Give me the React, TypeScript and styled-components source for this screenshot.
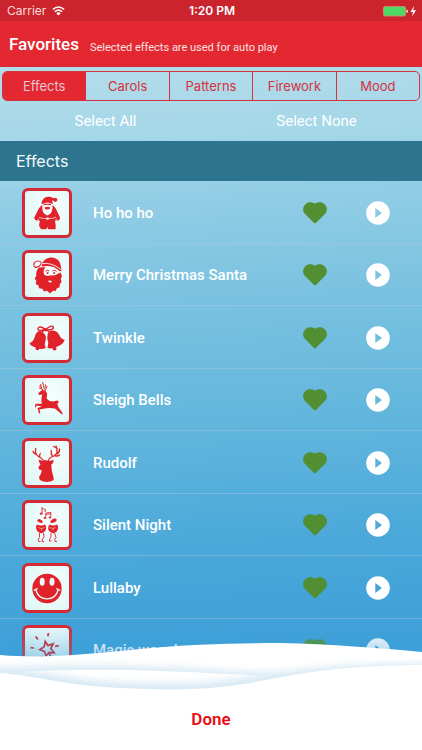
import React, { useState } from "react";
import styled, { createGlobalStyle, css } from "styled-components";

const RED = "#e32832";
const INK = "#e1222b";

const GlobalStyle = createGlobalStyle`
  *, *::before, *::after { box-sizing: border-box; }
  body { margin: 0; font-family: Roboto, sans-serif; }
  button { font: inherit; margin: 0; padding: 0; border: 0; background: none; cursor: pointer; }
  svg { display: block; }
`;

const Screen = styled.div`
  position: relative;
  display: flex;
  flex-direction: column;
  height: 100vh;
  min-height: 600px;
  overflow: hidden;
  background: #fff;
`;

const StatusBar = styled.div`
  display: grid;
  grid-template-columns: 1fr auto 1fr;
  align-items: center;
  flex: none;
  height: 21px;
  padding: 1px 5px 0 7px;
  background: #cb242d;
  color: #fff;
  font: 400 12px/20px Inter, sans-serif;
`;

const Carrier = styled.span`
  display: flex;
  align-items: center;
  gap: 6px;
  color: #fbdcdd;
`;

const Clock = styled.time`
  font-weight: 600;
`;

const Power = styled.span`
  display: flex;
  align-items: center;
  justify-content: flex-end;
`;

const Header = styled.header`
  display: flex;
  align-items: flex-end;
  gap: 11px;
  flex: none;
  height: 46px;
  padding: 0 9px 12px;
  background: ${RED};
  border-bottom: 1px solid #cf2a35;
  color: #fff;
`;

const Title = styled.h1`
  margin: 0;
  font-size: 17px;
  font-weight: 500;
  line-height: 20px;
`;

const Hint = styled.span`
  color: #ffe3e3;
  font-size: 11px;
  line-height: 12px;
`;

const Content = styled.main`
  display: flex;
  flex-direction: column;
  flex: 1;
  min-height: 0;
  padding-bottom: 69px;
  background: linear-gradient(177deg, #b4dcea 0%, #a3d7e8 12%, #92cde5 20%, #7cc3e1 33%, #62b6dc 52%, #4aa8da 70%, #3fa1d8 82%, #3c9dd7 100%);
`;

const Tabs = styled.div`
  display: flex;
  flex: none;
  height: 30px;
  margin: 4px 2px 0;
  border: 1px solid #d4323e;
  border-radius: 5px;
  overflow: hidden;
`;

const Tab = styled.button<{ $active: boolean }>`
  flex: 1;
  color: #d4323e;
  font: 400 13px/28px Inter, sans-serif;

  & + & {
    border-left: 1px solid #d4323e;
  }

  ${(p) =>
    p.$active &&
    css`
      background: ${RED};
      color: #e6c6d2;
    `}
`;

const BulkActions = styled.div`
  display: flex;
  flex: none;
  height: 40px;
`;

const BulkButton = styled.button`
  flex: 1;
  color: #fff;
  font-size: 15px;
  line-height: 20px;
`;

const SectionTitle = styled.h2`
  flex: none;
  height: 40px;
  margin: 0;
  padding: 0 16px;
  background: #2d758f;
  color: #f3fafc;
  font: 400 16px/40px Inter, sans-serif;
`;

const EffectList = styled.ul`
  display: grid;
  grid-auto-rows: 1fr;
  flex: 1;
  min-height: 0;
  margin: 0;
  padding: 0;
  list-style: none;
`;

const EffectRow = styled.li`
  display: flex;
  align-items: center;
  min-height: 56px;
  padding: 2px 32px 0 22px;
  border-bottom: 1px solid rgba(180, 200, 225, 0.4);
`;

const Tile = styled.span`
  flex: none;
  width: 50px;
  height: 50px;
  border: 3px solid #d42a35;
  border-radius: 6px;
  background: radial-gradient(circle at 60% 40%, #f6fffd, #dcf5f4);

  svg {
    margin: -3px;
  }
`;

const EffectName = styled.span`
  flex: 1;
  margin-left: 21px;
  color: #fff;
  font-size: 15px;
  font-weight: 500;
  line-height: 20px;
`;

const IconButton = styled.button`
  flex: none;
  width: 24px;
  height: 24px;

  & + & {
    margin-left: 39px;
  }
`;

const Footer = styled.footer`
  position: absolute;
  right: 0;
  bottom: 0;
  left: 0;
`;

const Haze = styled.div`
  height: 45px;
  margin-bottom: -30px;
  background: linear-gradient(rgba(60, 159, 216, 0), rgba(60, 159, 216, 0.6));
`;

const Snow = styled.svg`
  position: relative;
  width: 100%;
  height: 50px;
`;

const DoneButton = styled.button`
  width: 100%;
  height: 60px;
  padding-bottom: 2px;
  background: #fff;
  color: #e60d12;
  font-size: 17px;
  font-weight: 600;
`;

const Art = ({ children }: { children: React.ReactNode }) => (
  <svg width="50" height="50" viewBox="0 0 50 50" fill={INK} aria-hidden="true">
    {children}
  </svg>
);

const Santa = () => (
  <Art>
    <path d="M19.500 16C19.700 11 23 8.300 28 8.700L32 10.300A2 2 0 1 1 31.600 12.800L30 12.400L31 16Z" />
    <path d="M20 17Q17 19.500 15.500 23L12.300 29.500Q12.500 33 16 32.300L17.800 33L17 37.500L19 41.200H24.300L25.200 39L26.300 41.200H33.500L33.700 37.500L33 33L34.500 32.300Q38 33 38 29.500L35 23Q33.500 19.500 30.800 17Z" />
    <path d="M20.500 16Q19 25.500 25.300 27.500Q31.500 25.500 30.500 16Q25.500 13 20.500 16Z" fill="#f4fbfa" />
    <path d="M22.300 19.800Q25.300 17.700 28.600 19.800Q27.200 22 25.400 21.200Q23.700 22 22.300 19.800ZM21.700 15.800H29V17.300Q25.300 16.300 21.700 17.300Z" />
    <path d="M17 29.300Q20 30.800 24 30.500M27 30.500Q31 30.800 34 29.100M15.600 30.600L17.400 32.300M35 30.600L33.200 32.300" fill="none" stroke="#f4fbfa" strokeWidth=".7" />
    <path d="M24.200 29.600H26.800V31.600H24.200Z" fill="#f4fbfa" />
  </Art>
);

const SantaFace = () => (
  <Art>
    <path d="M20 13.500C23.500 6.500 32.500 5.500 37 11C39 14 39 18 39.600 20.500L38 21.500Q30 14 19.500 16.800Z" />
    <path d="M19.500 12.500Q16 9.500 12.600 12.400Q10.500 16 13.500 17.400Q17.500 17.300 19.500 13" fill="none" stroke={INK} strokeWidth="1.100" />
    <path d="M19.500 13.800Q29 11.700 39 19.500" fill="none" stroke="#f1fbf9" strokeWidth=".9" />
    <path d="M17 17.500L23.500 17.300Q20.500 21 22.200 24.500Q24 27 28.500 25.300Q33 26.300 36.300 23.500L38.500 22.500L40 26L38.800 29L39.600 32L37.800 34.300L37.600 37.300L35 38.300L33.500 41L31 40.700L28 43.500L25 40.700L22 41.500L20.300 38.700L17 38.300L16.500 35.500L13.600 34L14.400 31L12.600 28.500L14.300 26Q13.500 21 17 17.500Z" />
    <path d="M23.500 21.500Q25.200 19.200 27.200 21M30.500 21Q32.500 19.200 34.500 21.500" fill="none" stroke={INK} strokeWidth="1" />
    <circle cx="25.600" cy="23" r="1" />
    <circle cx="32.200" cy="23" r="1" />
    <path d="M25.800 31Q28 30 30 31.200Q28.500 34 25.800 31Z" fill="#f4fbfa" />
  </Art>
);

const Bells = () => (
  <Art>
    <path d="M17.800 18Q21.300 18.500 23.500 22.500Q25.200 26.500 23.600 30.500L24 35Q18 37 13.500 34.500Q9.500 33.500 7.300 30.500Q11.500 28.500 12.700 24Q14 18.600 17.800 18Z" />
    <path d="M29 17.500Q34.500 17 37 21.500Q39 26 42.700 27Q41 31.500 36.500 33Q31 36.500 25.500 35L26.300 29.500Q24.500 25 25.500 21Q26.500 18 29 17.500Z" />
    <circle cx="15.500" cy="35.300" r="1.900" />
    <circle cx="32.500" cy="35.400" r="2" />
    <path d="M23.500 16.500Q17.500 12 16 15.500Q15.500 19 23.500 16.500Q29.500 11.500 31.300 14Q32.500 17.500 23.500 16.500Z" fill="#f1fbf9" stroke={INK} strokeWidth="1.400" />
    <path d="M22.500 17L18 21M24.500 17L29 20" stroke={INK} strokeWidth="1.500" />
    <path d="M23.800 18Q26 22 24 27T24.700 36" fill="none" stroke="#f1fbf9" strokeWidth="1" />
    <circle cx="23.600" cy="16.800" r="1.700" />
  </Art>
);

const Reindeer = () => (
  <Art>
    <path d="M18.700 16L20.800 15L23.800 16.300L25.200 18.500L24.600 23.500L27.500 26Q32 27 35 25.600L37 26.600L35.500 28.500L36 31.500L40.800 38.500L40 39.600L33 33.500Q28 32.500 24 33.300L17.500 34.400L18.300 38.200L17 38.500L15.500 33L20 31.600L14.600 30.600L13.800 32.500L12.800 32L13.600 28.800L20 28.700Q18.600 25 20.300 19.600L17.500 20L16 18.700Z" />
    <path d="M21.500 16Q19 14 18.600 9M19.200 12.500L17.500 10.500M20 14L17 12.800M23 16Q25 14 23.500 9.500M22.300 14.500Q22 10.500 20.500 7M23.800 13L25.500 11.500" fill="none" stroke={INK} strokeWidth="1" />
  </Art>
);

const StagHead = () => (
  <Art>
    <path d="M16.500 21.600L21 23L23.300 22L26.500 23L31.800 22Q31 26 29.300 26.600L29.700 32L31.700 40L31.500 42.300Q25 46 17.800 42L17 39Q19.500 36 19.800 32.300L17.200 31.600L16.300 29.600L18.500 26.300L17.500 25Z" />
    <path d="M21.800 23Q20 20 16.500 18.500Q12.500 16 13.700 10.500M14.500 16.500Q11.500 15.500 11 13.500M18 19.500Q17 17.500 18.300 15.500M26 23.500Q26.500 20 31 18.500Q37.500 15.500 34 8M35 16Q38 14 37.500 11M33 17.800Q36 18.500 37.500 17M30.500 18.500Q28.500 15.500 29.300 12.500M35 10.500Q33 9 31.500 8.500" fill="none" stroke={INK} strokeWidth="1.300" strokeLinecap="round" />
  </Art>
);

const Carolers = () => (
  <Art>
    <path d="M20 12.800V7.500Q21 9.500 23.500 9.700L23 12M23.800 17V13L28.800 12.500V16.500M23.800 14.300L28.800 13.800" fill="none" stroke={INK} strokeWidth=".9" />
    <ellipse cx="19.200" cy="13.700" rx="1.500" ry="1.100" />
    <ellipse cx="23" cy="18" rx="1.400" ry="1.100" />
    <ellipse cx="28" cy="17.500" rx="1.400" ry="1.100" />
    <path d="M15 20.500Q16.500 17.500 20 20.500L21 22.500Q17.500 24 15 20.500ZM28 22.500L29 20.500Q32.500 17 35 20Q32.500 24 28 22.500Z" />
    <path d="M15 24.500Q19 26.500 23 24.500Q25.500 28 22.800 31.500Q18.500 35 15.200 31Q13 27.500 15 24.500Z" />
    <path d="M27.500 24.500Q31.500 26.500 35 24.500Q37.500 27.500 34.700 31.500Q31 35 27 31Q25 28 27.500 24.500Z" />
    <path d="M16.500 27.500L19.500 28.500L22.500 27.500M19.500 28.500V30.500M27.500 27.500L31 28.500L33.500 27.500M31 28.500V30.500" fill="none" stroke="#f1fbf9" strokeWidth=".5" />
    <path d="M17.500 33V37.500Q15.500 38.500 16.500 41.500H18.500M21.500 33L22 37Q20 38.500 20 41.500H22M29 33V37Q27 38.500 27.500 41H29.500M32.500 33L34 37.500Q32 39 33 41.500H35" fill="none" stroke={INK} strokeWidth=".9" />
  </Art>
);

const Smiley = () => (
  <Art>
    <circle cx="25" cy="25.500" r="14.700" />
    <ellipse cx="20.200" cy="18.800" rx="2.500" ry="4" fill="#f1fbf9" />
    <ellipse cx="30" cy="18.800" rx="2.500" ry="4" fill="#f1fbf9" />
    <path d="M13.700 26.500Q16 35.800 25 35.800T36.300 26.500M12.300 27.200L15.200 25.800M34.800 25.800L37.700 27.200" fill="none" stroke="#f1fbf9" strokeWidth="1.300" strokeLinecap="round" />
  </Art>
);

const MagicStar = () => (
  <Art>
    <g fill="none" stroke={INK}>
      <path d="M23.300 16.500L26 20.600L31 18.900L28.800 23.500L32 27.800L27 27.500L24 31.200L22.700 26.600L17.900 24.600L22.200 21.800Z" strokeWidth="1.800" />
      <path d="M13.600 11.400L16 14.500M26.500 8L25.800 11.300M8.500 22.700L12 23M33 21.400L36.800 20.600M26.500 28L32 36M20 31L18.500 34" strokeWidth="1.700" />
    </g>
  </Art>
);

const Wifi = () => (
  <svg width="13" height="10" viewBox="0 0 13 10" aria-hidden="true">
    <path d="M.8 3.500Q6.500-1.500 12.200 3.500M2.800 5.700Q6.500 2.500 10.200 5.700" fill="none" stroke="#fff" strokeWidth="1.500" />
    <path d="M4.300 7.200Q6.500 5.400 8.700 7.200L6.500 9.500Z" fill="#fff" />
  </svg>
);

const Battery = () => (
  <svg width="35" height="12" viewBox="0 0 35 12" aria-hidden="true">
    <rect x="1.500" y="1.500" width="22" height="9.500" rx="1.500" fill="#4cd964" stroke="#c98a6c" />
    <path d="M24.500 4.500Q26 5 26 6.200T24.500 8Z" fill="#fff" />
    <path d="M32 1L28.500 7H31L30 11.500L34 5.300H31.300Z" fill="#fff" />
  </svg>
);

const Heart = ({ on }: { on: boolean }) => (
  <svg width="24" height="24" viewBox="0 0 24 24" aria-hidden="true">
    <path
      d="M12 2.700C14.800.8 18.800.6 21.600 3.200C24.700 6.200 24.600 10.200 21.900 13L13.200 21.700Q12 22.800 10.800 21.700L2.100 13C-.6 10.200-.7 6.200 2.400 3.200C5.200.6 9.200.8 12 2.700Z"
      fill={on ? "#528f33" : "rgba(255,255,255,.5)"}
    />
  </svg>
);

const Play = () => (
  <svg width="24" height="24" viewBox="0 0 24 24" aria-hidden="true">
    <path fill="#fff" fillRule="evenodd" d="M12 .2A11.800 11.800 0 1 0 12 23.800A11.800 11.800 0 1 0 12 .2ZM9.300 6.900L16 12L9.300 17.100Z" />
  </svg>
);

const FRONT_EDGE = "M0 33C40 36 60 45 120 48C180 51 215 49 250 43C300 34 330 26 422 25";
const MIDDLE_SHAPE = "M0 33C60 29 110 29 160 31C220 33 260 36 300 37L240 50H80L0 35Z";

const SnowHills = () => (
  <Snow viewBox="0 0 422 50" preserveAspectRatio="none" aria-hidden="true">
    <defs>
      <filter id="drift" x="-10%" y="-100%" width="120%" height="300%">
        <feGaussianBlur stdDeviation="5" />
      </filter>
      <clipPath id="backHill">
        <path d="M0 15C45 19 90 14 140 9C190 4 240 3 280 3C330 4 380 8 422 12V50H0Z" />
      </clipPath>
      <clipPath id="middleHill">
        <path d={MIDDLE_SHAPE} />
      </clipPath>
    </defs>
    <g clipPath="url(#backHill)">
      <path d="M0 0H422V50H0Z" fill="#fff" />
      <path d="M-10 34C60 30 110 31 160 33C220 35 240 39 280 38C310 34 330 31 432 29" fill="none" stroke="#c3deee" strokeWidth="8" filter="url(#drift)" />
    </g>
    <g clipPath="url(#middleHill)">
      <path d="M0 0H422V50H0Z" fill="#fff" />
      <path d={FRONT_EDGE} fill="none" stroke="#c3deee" strokeWidth="8" filter="url(#drift)" />
    </g>
    <path d={`${FRONT_EDGE}V50H0Z`} fill="#fff" />
  </Snow>
);

const TABS = ["Effects", "Carols", "Patterns", "Firework", "Mood"];

const EFFECTS = [
  { name: "Ho ho ho", Icon: Santa },
  { name: "Merry Christmas Santa", Icon: SantaFace },
  { name: "Twinkle", Icon: Bells },
  { name: "Sleigh Bells", Icon: Reindeer },
  { name: "Rudolf", Icon: StagHead },
  { name: "Silent Night", Icon: Carolers },
  { name: "Lullaby", Icon: Smiley },
  { name: "Magic woosh", Icon: MagicStar },
];

const ALL = EFFECTS.map((e) => e.name);

export default function App() {
  const [tab, setTab] = useState("Effects");
  const [chosen, setChosen] = useState<string[]>(ALL);

  const toggle = (name: string) =>
    setChosen((list) => (list.includes(name) ? list.filter((n) => n !== name) : [...list, name]));

  return (
    <>
      <GlobalStyle />
      <Screen>
        <StatusBar>
          <Carrier>
            Carrier <Wifi />
          </Carrier>
          <Clock>1:20 PM</Clock>
          <Power>
            <Battery />
          </Power>
        </StatusBar>
        <Header>
          <Title>Favorites</Title>
          <Hint>Selected effects are used for auto play</Hint>
        </Header>
        <Content>
          <Tabs role="tablist">
            {TABS.map((name) => (
              <Tab key={name} role="tab" aria-selected={tab === name} $active={tab === name} onClick={() => setTab(name)}>
                {name}
              </Tab>
            ))}
          </Tabs>
          <BulkActions>
            <BulkButton onClick={() => setChosen(ALL)}>Select All</BulkButton>
            <BulkButton onClick={() => setChosen([])}>Select None</BulkButton>
          </BulkActions>
          <SectionTitle>{tab}</SectionTitle>
          <EffectList>
            {EFFECTS.map(({ name, Icon }) => (
              <EffectRow key={name}>
                <Tile>
                  <Icon />
                </Tile>
                <EffectName>{name}</EffectName>
                <IconButton aria-label={`Favorite ${name}`} aria-pressed={chosen.includes(name)} onClick={() => toggle(name)}>
                  <Heart on={chosen.includes(name)} />
                </IconButton>
                <IconButton aria-label={`Play ${name}`}>
                  <Play />
                </IconButton>
              </EffectRow>
            ))}
          </EffectList>
        </Content>
        <Footer>
          <Haze />
          <SnowHills />
          <DoneButton>Done</DoneButton>
        </Footer>
      </Screen>
    </>
  );
}
